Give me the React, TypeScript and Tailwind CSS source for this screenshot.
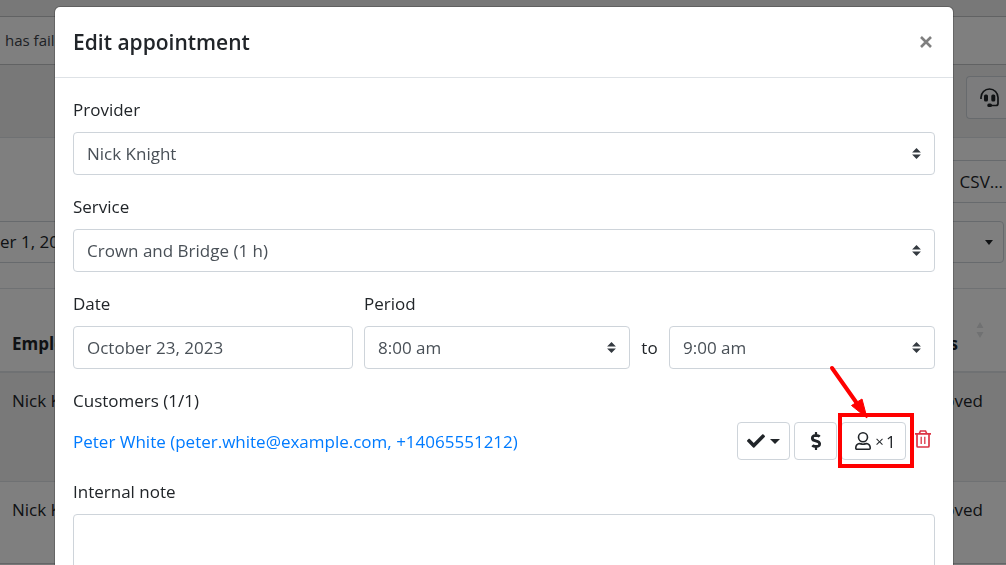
import type { ReactNode } from 'react';
import { FaCheck, FaDollarSign } from 'react-icons/fa';

const fieldClass =
  'block h-[43px] w-full appearance-none rounded border border-[#ced4da] bg-white px-[13px] pb-px text-[17px] text-[#495057]';

function Field({ id, label, children }: { id: string; label: string; children: ReactNode }) {
  return (
    <div className="flex flex-col gap-[9px]">
      <label htmlFor={id} className="leading-[27px]">{label}</label>
      {children}
    </div>
  );
}

function Select({ id, value }: { id: string; value: string }) {
  return (
    <div className="relative min-w-0 flex-1">
      <select id={id} className={fieldClass} defaultValue={value}>
        <option>{value}</option>
      </select>
      <svg viewBox="0 0 4 5" className="pointer-events-none absolute top-4 right-[14px] h-[11px] w-[9px] fill-[#343a40]" aria-hidden="true">
        <path d="M2 0L0 2h4zm0 5L0 3h4z" />
      </svg>
    </div>
  );
}

function Caret() {
  return (
    <svg viewBox="0 0 10 5" className="h-[5px] w-[10px] fill-current" aria-hidden="true">
      <path d="M0 0h10L5 5z" />
    </svg>
  );
}

function HeadsetIcon() {
  return (
    <svg viewBox="0 0 20 20" className="size-5" aria-hidden="true">
      <path d="M1 11V9.500a8.500 8.500 0 0 1 17 0V15.500a2 2 0 0 1-2 2H11" fill="none" stroke="currentColor" strokeWidth="1.700" />
      <rect x="4" y="6.500" width="4" height="7" rx="1.500" fill="currentColor" />
      <rect x="11.300" y="6.500" width="4" height="7" rx="1.500" fill="currentColor" />
      <rect x="7.300" y="15.600" width="4.700" height="3.400" rx="1.600" fill="currentColor" />
    </svg>
  );
}

function UserIcon() {
  return (
    <svg viewBox="0 0 16 18" className="h-[18px] w-4" fill="none" stroke="currentColor" strokeWidth="1.600" strokeLinejoin="round" aria-hidden="true">
      <circle cx="8" cy="5.300" r="4.500" />
      <path d="M4.300 11.600C2.200 12.200 .8 13.800 .8 15.800V16.200a1 1 0 0 0 1 1H14.200a1 1 0 0 0 1-1V15.800C15.200 13.800 13.800 12.200 11.700 11.600C10.400 11.600 9.700 12.200 8 12.200S5.600 11.600 4.300 11.600z" />
    </svg>
  );
}

function TrashIcon() {
  return (
    <svg viewBox="0 0 16 18" className="h-[18px] w-4" fill="none" stroke="currentColor" strokeWidth="1.700" aria-hidden="true">
      <path d="M0 3.800h16M4.300 3.500L5.500 1h5l1.200 2.500M2 4V16a1 1 0 0 0 1 1h10a1 1 0 0 0 1-1V4" />
      <path d="M6.200 6.800v7.200M9.800 6.800v7.200" strokeWidth="1.300" />
    </svg>
  );
}

function Background() {
  return (
    <div className="pt-4">
      <div className="flex h-[49px] items-center border-y border-[#c3c4c7] bg-white px-[5px] text-[15px] text-[#3c434a]">
        has failed
      </div>
      <div className="flex h-[73px] items-start justify-end border-b border-[#dee2e6] pt-[11px]">
        <button aria-label="Support" className="flex h-[43px] w-10 items-center rounded-l border border-r-0 border-[#ced4da] bg-[#f8f9fa] pl-[13px] text-[#212529]">
          <HeadsetIcon />
        </button>
      </div>
      <div className="bg-white text-[#212529]">
        <div className="flex justify-end pt-[22px]">
          <button className="h-[43px] w-32 border-y border-[#ced4da] pr-[3px] text-right">CSV…</button>
        </div>
        <div className="flex justify-between pt-[18px] pr-0.5">
          <button className="h-[42px] w-48 border-y border-[#ced4da] pb-0.5 text-left">er 1, 2023</button>
          <button aria-label="Filter" className="flex h-[42px] w-48 items-center justify-end rounded border border-[#ced4da] pr-[10px]">
            <svg viewBox="0 0 8 5" className="h-[5px] w-2 fill-current" aria-hidden="true">
              <path d="M0 0h8L4 5z" />
            </svg>
          </button>
        </div>
        <table className="mt-[25px] w-full border-t border-[#dee2e6]">
          <thead>
            <tr className="h-[83px] border-b-2 border-[#dee2e6]">
              <th className="px-3 pt-7 text-left">Employee</th>
              <th className="pr-[22px]">
                <div className="flex items-start justify-end gap-[18px]">
                  <span className="pt-7">Status</span>
                  <svg viewBox="0 0 8 16" className="mt-5 h-4 w-2 fill-[#e0e2e4]" aria-hidden="true">
                    <path d="M4 0l3.500 6h-7zM4 16l3.500-6h-7z" />
                  </svg>
                </div>
              </th>
            </tr>
          </thead>
          <tbody>
            <tr className="h-[110px] border-b border-[#dee2e6] bg-[#f2f2f2] align-top">
              <td className="px-3 pt-[14px]">Nick Knight</td>
              <td className="pt-[14px] pr-[23px] text-right">Approved</td>
            </tr>
            <tr className="h-[82px] border-b border-[#c8cbcf] align-top">
              <td className="px-3 pt-[14px]">Nick Knight</td>
              <td className="pt-[14px] pr-[23px] text-right">Approved</td>
            </tr>
          </tbody>
        </table>
      </div>
    </div>
  );
}

const actionClass = 'flex h-[38px] items-center justify-center rounded border border-[#ced4da] bg-white';

export default function App() {
  return (
    <div className="h-screen overflow-hidden bg-[#f1f1f1] font-['Open_Sans','Noto_Sans',sans-serif] text-[17px] leading-[27px] text-[#212529]">
      <Background />
      <div className="fixed inset-0 overflow-hidden bg-black/50 pt-1.5 pl-0.5">
        <div role="dialog" aria-labelledby="title" className="mx-auto max-w-[900px] rounded-md border border-black/20 bg-white bg-clip-padding">
          <header className="flex h-[71px] items-center justify-between border-b border-[#dee2e6] px-[18px]">
            <h1 id="title" className="text-[21px] font-semibold">Edit appointment</h1>
            <button type="button" aria-label="Close" className="pr-[3px] text-[#7f7f7f]">
              <svg viewBox="0 0 12 12" className="size-3" aria-hidden="true">
                <path d="M1 1l10 10M11 1L1 11" stroke="currentColor" strokeWidth="2.600" />
              </svg>
            </button>
          </header>
          <form className="flex flex-col gap-[18px] p-[18px]">
            <Field id="provider" label="Provider"><Select id="provider" value="Nick Knight" /></Field>
            <Field id="service" label="Service"><Select id="service" value="Crown and Bridge (1 h)" /></Field>
            <div className="grid grid-cols-3 gap-[11px]">
              <Field id="date" label="Date">
                <input id="date" type="text" defaultValue="October 23, 2023" className={fieldClass} />
              </Field>
              <div className="col-span-2">
                <Field id="from" label="Period">
                  <div className="flex items-center">
                    <Select id="from" value="8:00 am" />
                    <label htmlFor="until" className="w-[39px] text-center">to</label>
                    <Select id="until" value="9:00 am" />
                  </div>
                </Field>
              </div>
            </div>
            <section className="flex flex-col gap-2">
              <h2>Customers (1/1)</h2>
              <div className="flex items-center justify-between">
                <a href="#customer" className="text-[#007bff]">Peter White (peter.white@example.com, +14065551212)</a>
                <div className="flex items-center">
                  <button type="button" aria-label="Status" className={`${actionClass} mr-1 w-[53px] gap-[5px]`}>
                    <FaCheck size={18} />
                    <Caret />
                  </button>
                  <button type="button" aria-label="Payment" className={`${actionClass} mr-1 w-[43px]`}>
                    <FaDollarSign size={18} />
                  </button>
                  <div className="relative mr-[9px]">
                    <button type="button" className={`${actionClass} w-[65px] gap-1 pl-1`}>
                      <UserIcon />
                      <span className="flex gap-0.5"><span className="text-[15px]">×</span>1</span>
                    </button>
                    <svg viewBox="0 0 90 104" className="pointer-events-none absolute -top-[58px] -left-[15px] h-[104px] w-[90px] max-w-none" aria-hidden="true">
                      <rect x="14" y="51" width="72" height="51" fill="none" stroke="#f00" strokeWidth="4" />
                      <path d="M6 4L30 38" stroke="#f00" strokeWidth="4" strokeLinecap="round" />
                      <path d="M41 54L25.500 41.500L36 35z" fill="#f00" stroke="#f00" />
                    </svg>
                  </div>
                  <button type="button" aria-label="Remove customer" className="mr-1 pb-1 text-[#dc3545]">
                    <TrashIcon />
                  </button>
                </div>
              </div>
            </section>
            <Field id="note" label="Internal note">
              <textarea id="note" className="h-24 w-full resize-none rounded border border-[#ced4da] px-[13px] py-2" />
            </Field>
          </form>
        </div>
      </div>
    </div>
  );
}
